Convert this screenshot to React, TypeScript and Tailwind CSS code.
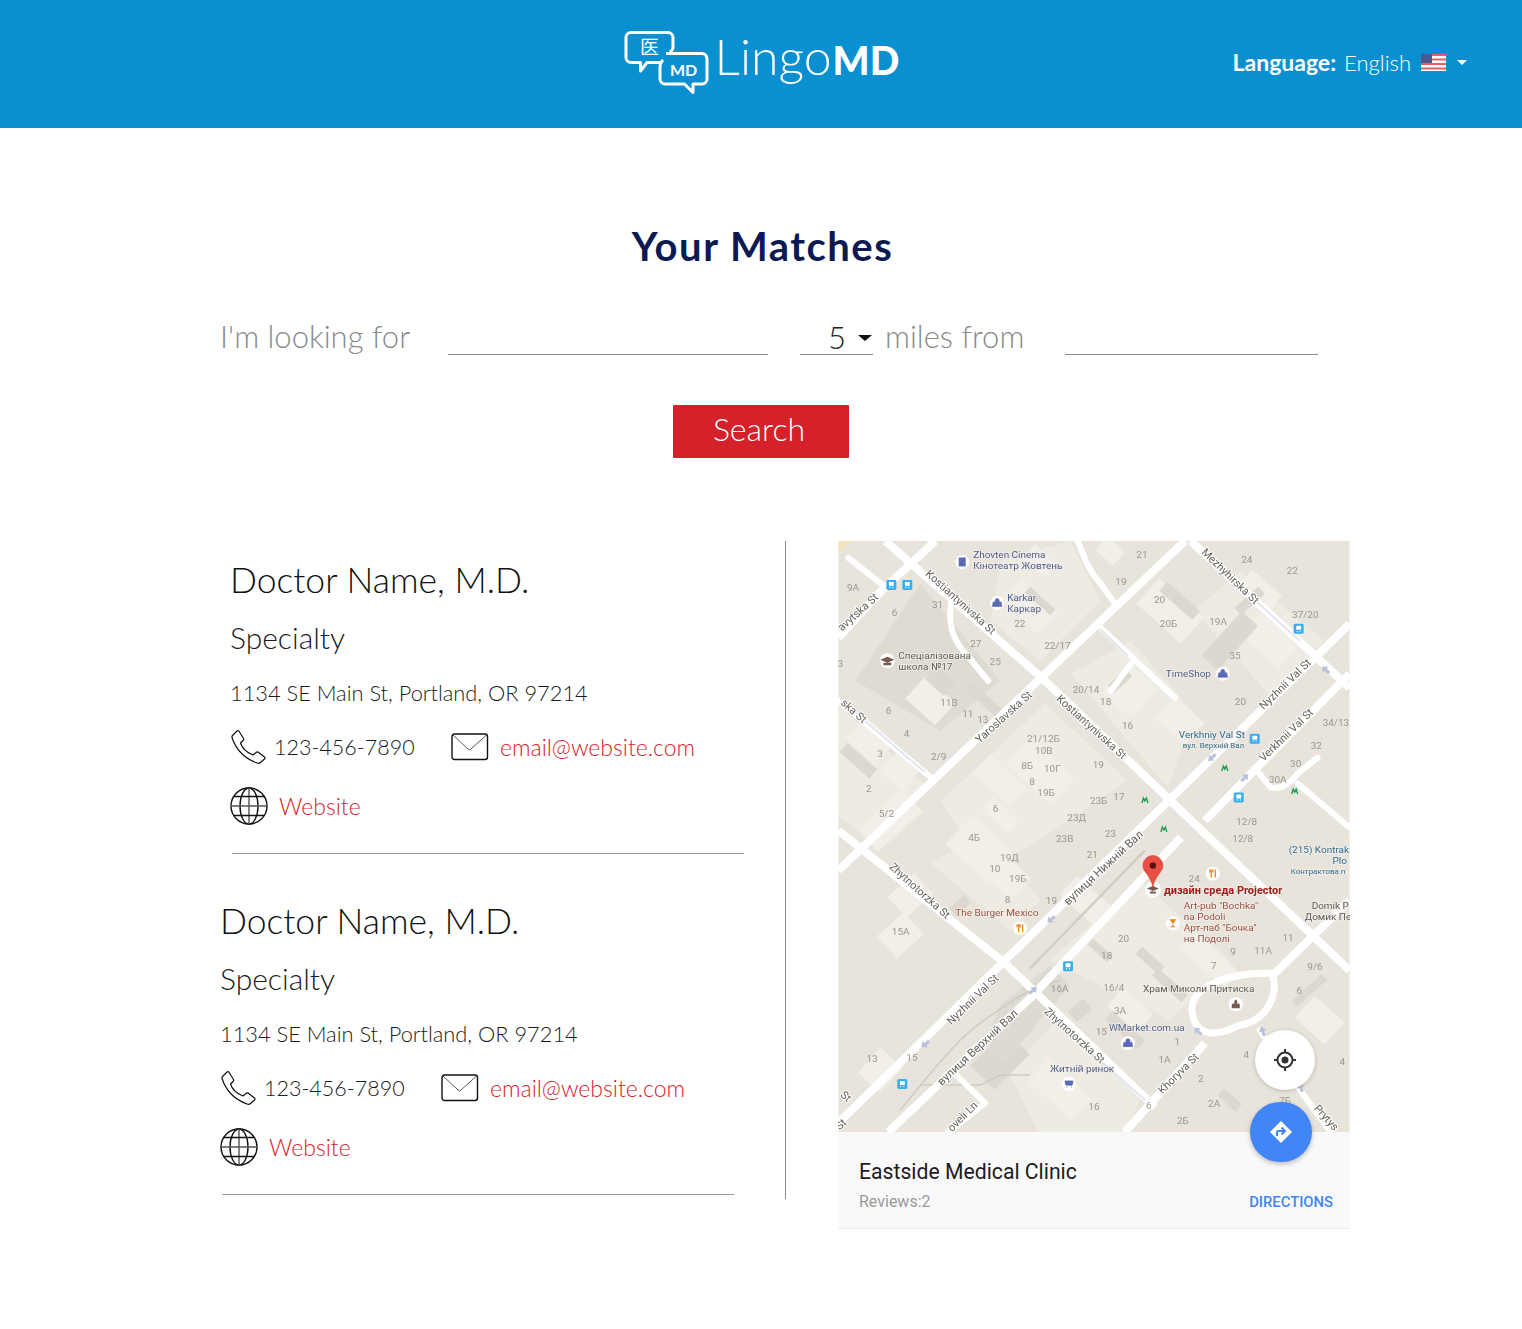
import React from "react";

type L = [string, number, number];
type T = { t: string; x: number; y: number; s?: number; c?: string; r?: number; w?: number };

const z4 = (x: number, y: number): [number, number] => [838 + x / 3, 540 + y / 3];
const z5 = (x: number, y: number): [number, number] => [838 + x / 3, 830 + y / 3];

const nums4: L[] = [
  ["9A",44,140],["21",912,40],["24",1227,55],["22",1364,88],["19",849,122],["6",169,214],["31",298,190],["20",965,176],["20Б",992,248],["19A",1141,241],["37/20",1403,221],["22",545,249],["27",413,309],["25",471,361],["22/17",658,315],["35",1192,344],["3",6,368],["20/14",744,447],["18",803,483],["20",1208,481],["11В",332,485],["6",151,508],["11",389,519],["13",434,536],["16",869,553],["34/13",1495,546],["21/12Б",616,593],["4",205,580],["10В",617,629],["32",1436,614],["2/9",301,649],["3",125,640],["8Б",567,675],["10Г",643,685],["19",781,671],["30",1374,668],["8",582,723],["30A",1320,718],["2",91,743],["19Б",624,757],["23Б",782,779],["17",843,769],["5/2",144,818],["6",472,803],["23Д",716,830],["12/8",1227,843],["23",817,879],["4Б",408,890],["23В",680,895],["12/8",1215,895],
];
const nums5: L[] = [
  ["19Д",514,80],["10",470,115],["19Б",539,143],["21",763,72],["24",1069,144],["8",508,206],["19",640,210],["15A",187,304],["20",857,325],["11",1351,323],["18",806,376],["9",1186,364],["11A",1276,361],["7",1128,407],["9/6",1432,410],["16A",665,474],["16/4",828,472],["6",1385,481],["3A",846,540],["15",790,604],["1",1018,635],["13",101,686],["15",221,682],["4",1226,673],["1A",980,687],["4",1514,695],["2",1089,745],["2A",1129,821],["16",768,829],["6",933,825],["2Б",1035,870],["7Б",1342,812],
];

const streets: T[] = [
  { t: "Kostiantynivska St", x: 958, y: 604, r: 42, s: 11 },
  { t: "Kostiantynivska St", x: 1089, y: 729, r: 42, s: 11 },
  { t: "Mezhyhirska St", x: 1228, y: 578, r: 44, s: 11 },
  { t: "Yaroslavska St", x: 1006, y: 719, r: -42, s: 11 },
  { t: "Nyzhnii Val St", x: 1288, y: 686, r: -44, s: 11 },
  { t: "Verkhnii Val St", x: 1289, y: 737, r: -44, s: 11 },
  { t: "avytska St", x: 860, y: 614, r: -42, s: 11 },
  { t: "ska St", x: 851, y: 713, r: 42, s: 11 },
  { t: "вулиця Нижній Вал", x: 1106, y: 870, r: -43, s: 11.500 },
  { t: "Zhytnotorzka St", x: 917, y: 893, r: 42, s: 11 },
  { t: "Zhytnotorzka St", x: 1072, y: 1038, r: 42, s: 11 },
  { t: "Nyzhnii Val St", x: 975, y: 1002, r: -44, s: 11 },
  { t: "вулиця Верхній Вал", x: 980, y: 1050, r: -43, s: 11.500 },
  { t: "Khoryva St", x: 1181, y: 1076, r: -45, s: 11 },
  { t: "oveli Ln", x: 965, y: 1119, r: -45, s: 11 },
  { t: "Prytys", x: 1324, y: 1120, r: 48, s: 11 },
  { t: "St", x: 843, y: 1099, r: 42, s: 11 },
  { t: "St", x: 843, y: 1127, r: -44, s: 11 },
];

const pois: T[] = [
  { t: "Zhovten Cinema", x: 973, y: 557, s: 10, c: "#4f5b8c" },
  { t: "Кінотеатр Жовтень", x: 973, y: 568, s: 10, c: "#4f5b8c" },
  { t: "Karkar", x: 1007, y: 600, s: 10, c: "#4f5b8c" },
  { t: "Каркар", x: 1007, y: 611, s: 10, c: "#4f5b8c" },
  { t: "Спеціалізована", x: 898, y: 658, s: 10, c: "#5f5a55" },
  { t: "школа №17", x: 898, y: 669, s: 10, c: "#5f5a55" },
  { t: "TimeShop", x: 1166, y: 676, s: 10, c: "#4f5b8c" },
  { t: "Verkhniy Val St", x: 1179, y: 737, s: 10, c: "#2f6a8c" },
  { t: "вул. Верхній Вал", x: 1183, y: 747, s: 8, c: "#2f6a8c" },
  { t: "(215) Kontrak", x: 1289, y: 853, s: 10, c: "#2f6a8c" },
  { t: "Plo", x: 1333, y: 864, s: 10, c: "#2f6a8c" },
  { t: "Контрактова п", x: 1291, y: 874, s: 8, c: "#2f6a8c" },
  { t: "Domik P", x: 1312, y: 909, s: 10, c: "#5f5a55" },
  { t: "Домик Пе", x: 1305, y: 920, s: 10, c: "#5f5a55" },
  { t: "The Burger Mexico", x: 955, y: 916, s: 10, c: "#9a5044" },
  { t: "Art-pub \"Bochka\"", x: 1184, y: 909, s: 10, c: "#9a5044" },
  { t: "na Podoli", x: 1184, y: 920, s: 10, c: "#9a5044" },
  { t: "Арт-паб \"Бочка\"", x: 1184, y: 931, s: 10, c: "#9a5044" },
  { t: "на Подолі", x: 1184, y: 942, s: 10, c: "#9a5044" },
  { t: "Храм Миколи Притиска", x: 1143, y: 992, s: 10, c: "#5f5a55" },
  { t: "WMarket.com.ua", x: 1109, y: 1031, s: 10, c: "#4f5b8c" },
  { t: "Житній ринок", x: 1050, y: 1072, s: 10, c: "#4f5b8c" },
];

const wide: string[] = [
  "M838 870L1185 540",
  "M838 637L881 590L935 540",
  "M838 1123L1350 623",
  "M888 1132L1031 997L1181 837",
  "M1205 820L1350 673",
  "M885 540L1045 680L1205 833L1350 970",
  "M1191 540L1350 687",
  "M838 830L1005 963L1155 1107",
  "M1125 1132L1205 1043",
  "M1275 973L1350 900",
];
const narrow: string[] = [
  "M838 700L931 777",
  "M848 557L881 583",
  "M1101 627L1175 697",
  "M1131 663L1111 690",
  "M951 603Q946 630 963 650L988 680",
  "M1078 540Q1088 570 1101 583L1115 603",
  "M1255 767L1271 787Q1285 790 1298 773L1318 757",
  "M1298 783L1350 827",
  "M951 1070L985 1103L948 1132",
  "M1298 1087L1331 1132",
  "M1260 1030L1298 1087",
];
const blocks: string[] = [
  "M1071 673L1131 640L1195 713L1168 787z",
  "M941 800L1045 703L1128 780L1038 840L985 870z",
  "M931 863L985 830L1040 900L1010 930z",
  "M1008 1070L1055 1023L1141 1097L1125 1132H1038z",
  "M1050 960L1140 880L1230 960L1170 1020z",
  "M838 705L925 785L870 840L838 815z",
  "M1195 610L1240 570L1325 640L1275 700z",
  "M1000 560L1070 540L1100 600L1040 660L990 620z",
];
const light: [number, number, number, number, number][] = [
  [890, 820, 60, 30, -42], [980, 850, 60, 38, 42], [1040, 770, 60, 36, 42], [1000, 780, 50, 25, 42], [930, 700, 40, 30, 42],
  [1170, 610, 60, 34, 42], [1270, 640, 50, 30, 42], [1130, 690, 40, 40, 42], [1180, 720, 40, 30, 42], [1030, 605, 50, 30, 42],
  [910, 895, 36, 28, -42], [900, 935, 36, 30, -42], [1085, 900, 45, 26, 42], [1210, 960, 60, 22, 42], [880, 1070, 30, 34, 42],
  [1060, 1090, 60, 30, 42], [1000, 870, 55, 30, 42], [1130, 1010, 40, 25, 42], [1320, 1020, 40, 30, 42], [1260, 590, 40, 22, 42], [870, 740, 40, 30, 42],
  [900, 770, 30, 30, 42], [1040, 560, 30, 18, 42], [1110, 550, 24, 18, 42], [985, 840, 44, 20, 42], [1000, 815, 36, 16, 42],
];
const dark: [number, number, number, number, number][] = [
  [1000, 1060, 34, 50, 45], [1230, 640, 22, 60, 42], [1180, 600, 44, 12, 42], [1040, 600, 34, 8, 42],
  [985, 700, 40, 10, 42], [1120, 680, 24, 10, -42], [858, 760, 40, 12, 42], [1150, 960, 30, 10, 42], [1170, 985, 40, 10, 42],
  [1125, 1030, 44, 12, 42], [1250, 600, 32, 10, -42], [960, 905, 20, 10, -42], [1310, 990, 40, 8, -42], [1230, 1100, 24, 10, 42],
  [1100, 950, 26, 8, 42], [1080, 1010, 20, 14, -42], [940, 680, 26, 18, 42],
];

function Poi({ x, y, c, k }: { x: number; y: number; c: string; k: "bag" | "fork" | "cup" }) {
  return (
    <g>
      <circle cx={x} cy={y} r={7} fill="#fff" />
      {k === "bag" && <path d={`M${x - 4} ${y - 1}h8l.8 4.5h-9.600zM${x - 2} ${y - 1}v-1.500a2 2 0 0 1 4 0V${y - 1}`} fill={c} stroke={c} strokeWidth={0.6} />}
      {k === "fork" && <path d={`M${x - 3} ${y - 4}v3M${x - 1.500} ${y - 4}v8M${x} ${y - 4}v3M${x + 2.500} ${y - 4}v8`} stroke={c} strokeWidth={1.300} fill="none" />}
      {k === "cup" && <path d={`M${x - 3.500} ${y - 4}h7l-3 4v3h2v1h-5v-1h2v-3z`} fill={c} />}
    </g>
  );
}

function Stop({ x, y, c = "#35aef3" }: { x: number; y: number; c?: string }) {
  return (
    <g>
      <rect x={x - 5} y={y - 5} width={10} height={10} rx={1.500} fill={c} />
      <rect x={x - 2.500} y={y - 3} width={5} height={4} rx={0.8} fill="#fff" />
      <circle cx={x - 1.500} cy={y + 2.500} r={0.7} fill="#fff" />
      <circle cx={x + 1.500} cy={y + 2.500} r={0.7} fill="#fff" />
    </g>
  );
}

function Metro({ x, y }: { x: number; y: number }) {
  return <path d={`M${x - 3} ${y + 2.500}l1.500-5 1.500 3 1.500-3 1.500 5`} fill="none" stroke="#1f9d55" strokeWidth={1.400} />;
}

function Arrow({ x, y, r }: { x: number; y: number; r: number }) {
  return <path transform={`rotate(${r} ${x} ${y})`} d={`M${x - 5} ${y}l5-4v2.500h5v3h-5v2.500z`} fill="#b9c1dd" />;
}

function MapArt() {
  return (
    <svg viewBox="838 540 512 592" className="block w-full h-[591px] blur-[0.4px]" style={{ fontFamily: "Roboto, sans-serif" }}>
      <rect x={838} y={540} width={512} height={592} fill="#e8e4dc" />
      <path d="M838 540h14l-14 12z" fill="#efe3c0" />
      <path d="M855 680L920 583L1000 680L940 730z" fill="#dfdbd3" />
      {blocks.map((d) => <path key={d} d={d} fill="#eeebe3" />)}
      {light.map(([x, y, w, h, r], i) => (
        <rect key={i} x={x - w / 2} y={y - h / 2} width={w} height={h} fill="#f2efe8" transform={`rotate(${r} ${x} ${y})`} />
      ))}
      {dark.map(([x, y, w, h, r], i) => (
        <rect key={i} x={x - w / 2} y={y - h / 2} width={w} height={h} fill="#dcd8cf" transform={`rotate(${r} ${x} ${y})`} />
      ))}
      <path d="M1000 1005L1050 965L1070 985L1005 1062L985 1040z" fill="#dedad2" />
      <path d="M1030 968L1145 850" stroke="#d2cec4" strokeWidth={2.500} fill="none" />
      <path d="M900 1110Q940 1060 960 1040T1030 990L1060 980" stroke="#cfcbc0" strokeWidth={1.500} fill="none" />
      <path d="M920 1085H980L1000 1075H1030" stroke="#cfcbc0" strokeWidth={1.500} fill="none" />
      <g fill="none" stroke="#fff" strokeLinecap="butt" strokeLinejoin="round">
        {wide.map((d) => <path key={d} d={d} strokeWidth={8} />)}
        {narrow.map((d) => <path key={d} d={d} strokeWidth={6} strokeLinecap="round" />)}
        <path d="M1192 1010C1192 985 1230 972 1272 973C1280 990 1270 1020 1240 1025C1220 1035 1195 1040 1192 1010z" strokeWidth={7} />
      </g>
      <g fill="none" stroke="#e3e5ef" strokeWidth={2}>
        <path d="M1100 628L1128 655" />
        <path d="M855 712L925 772" />
        <path d="M1245 590L1300 640" />
        <path d="M1100 1060L1145 1100" />
      </g>
      <g fill="#9b978f" fontSize={10}>
        {nums4.map(([t, x, y], i) => { const [a, b] = z4(x, y); return <text key={i} x={a} y={b + 3.500} textAnchor="middle">{t}</text>; })}
        {nums5.map(([t, x, y], i) => { const [a, b] = z5(x, y); return <text key={i} x={a} y={b + 3.500} textAnchor="middle">{t}</text>; })}
      </g>
      <g fill="#66625c" stroke="#fff" strokeWidth={2} paintOrder="stroke">
        {streets.map((s, i) => (
          <text key={i} x={s.x} y={s.y} fontSize={s.s} textAnchor="middle" transform={`rotate(${s.r} ${s.x} ${s.y})`}>{s.t}</text>
        ))}
      </g>
      <g stroke="#f2efe9" strokeWidth={1.500} paintOrder="stroke">
        {pois.map((p, i) => <text key={i} x={p.x} y={p.y} fontSize={p.s} fill={p.c}>{p.t}</text>)}
      </g>
      <text x={1164} y={894} fontSize={11} fontWeight={700} fill="#a01c1c" stroke="#f2efe9" strokeWidth={1.500} paintOrder="stroke">дизайн среда Projector</text>
      <Stop x={891} y={584} />
      <Stop x={907} y={584} />
      <Stop x={1299} y={628} />
      <Stop x={1239} y={797} />
      <Stop x={1255} y={738} />
      <Stop x={1068} y={966} />
      <Stop x={902} y={1084} />
      <Metro x={1225} y={768} />
      <Metro x={1295} y={791} />
      <Metro x={1145} y={800} />
      <Metro x={1164} y={829} />
      <Arrow x={1212} y={757} r={-42} />
      <Arrow x={1245} y={777} r={135} />
      <Arrow x={1326} y={669} r={42} />
      <Arrow x={1051} y={919} r={-40} />
      <Arrow x={1033} y={990} r={140} />
      <Arrow x={925} y={1044} r={-40} />
      <Arrow x={1198} y={1031} r={42} />
      <Arrow x={1263} y={1031} r={70} />
      <Arrow x={1301} y={1087} r={70} />
      <circle cx={962} cy={561} r={7} fill="#fff" />
      <rect x={958.500} y={556.500} width={7} height={9} fill="#5a6ab8" />
      <Poi x={997} y={602} c="#5a6ab8" k="bag" />
      <Poi x={1223} y={673} c="#5a6ab8" k="bag" />
      <Poi x={1128} y={1043} c="#5a6ab8" k="bag" />
      <Poi x={1213} y={873} c="#f2811d" k="fork" />
      <Poi x={1020} y={928} c="#f2811d" k="fork" />
      <Poi x={1173} y={923} c="#f2811d" k="cup" />
      <circle cx={887} cy={660} r={7.500} fill="#fff" />
      <path d="M880 659l7-3 7 3-7 3zM883 662v2.500h8V662z" fill="#7a5a50" />
      <circle cx={1069} cy={1084} r={7} fill="#fff" />
      <path d="M1065 1081h8l-1 4h-6zM1066.500 1087h.8M1071 1087h.8" fill="#5a6ab8" stroke="#5a6ab8" />
      <circle cx={1236} cy={1004} r={7} fill="#fff" />
      <path d="M1232 1008v-4l1.500-1 1 1v-3l1.500-2 1.500 2v3l1-1 1.500 1v4z" fill="#7a5a50" />
      <circle cx={1153} cy={889} r={8} fill="#fff" />
      <path d="M1147 888l6-2.500 6 2.500-6 2.500zM1150 891v2h6v-2z" fill="#7a5a50" />
      <path d="M1153 887C1151 875 1143 872 1143 865a10 10 0 0 1 20 0C1163 872 1155 875 1153 887z" fill="#ea4f42" stroke="#c9372c" strokeWidth={0.5} />
      <circle cx={1153} cy={865} r={3.200} fill="#5a1410" />
    </svg>
  );
}

function PhoneIcon() {
  return (
    <svg width={36} height={36} viewBox="0 0 36 36" fill="none" stroke="#111" strokeWidth={1.200} strokeLinejoin="round" className="shrink-0">
      <path d="M2.500 6.500L7 2Q8 1.200 9 2.200L13.500 9.500Q14 10.500 13 11.500L10.500 14Q13 22 23 26L26 23.500Q27 22.500 28 23L34.500 28Q35.500 29 34.500 30L30.500 33.500Q29 35 27 34Q8 27 2 8.500Q1.800 7.200 2.500 6.500z" />
    </svg>
  );
}

function MailIcon() {
  return (
    <svg width={38} height={28} viewBox="0 0 38 28" fill="none" className="shrink-0">
      <rect x={1} y={1} width={35.500} height={25.500} rx={2.500} stroke="#111" strokeWidth={1.400} />
      <path d="M2 2l15 14q1.500 1.500 3 0L35.500 2" stroke="#444" strokeWidth={0.9} />
    </svg>
  );
}

function GlobeIcon() {
  return (
    <svg width={38} height={38} viewBox="0 0 38 38" fill="none" stroke="#111" strokeWidth={1.400} className="shrink-0">
      <circle cx={19} cy={19} r={18} />
      <ellipse cx={19} cy={19} rx={9} ry={18} />
      <path d="M19 1v36M1 19h36" stroke="#555" />
      <path d="M4 9.500h30M4 28.500h30" />
    </svg>
  );
}

function Card({ indent, bottom }: { indent: string; bottom: string }) {
  return (
    <div className={`${indent} ${bottom} w-[522px]`}>
      <h2 className="text-[35.500px] leading-[44px] font-light text-[#111]">Doctor Name, M.D.</h2>
      <p className="mt-[15px] text-[30px] leading-[40px] font-light text-[#1a1a1a]">Specialty</p>
      <p className="mt-[20px] text-[21.800px] leading-[32px] font-light text-[#1a1a1a]">1134 SE Main St, Portland, OR 97214</p>
      <div className="mt-[20px] flex items-center h-[36px]">
        <PhoneIcon />
        <span className="ml-[8px] text-[21.500px] font-light text-[#1a1a1a] w-[177px]">123-456-7890</span>
        <MailIcon />
        <a className="ml-[11px] text-[23px] font-light text-[#d4232b]">email@website.com</a>
      </div>
      <div className="mt-[22px] flex items-center h-[38px]">
        <GlobeIcon />
        <a className="ml-[11px] text-[23px] font-light text-[#d4232b]">Website</a>
      </div>
      <div className="mt-[28px] h-px bg-[#9a9a9a] w-[512px] ml-[2px]" />
    </div>
  );
}

export default function App() {
  return (
    <div className="min-h-[1329px] bg-white" style={{ fontFamily: "Lato, sans-serif" }}>
      <header className="h-[128px] bg-[#0a90d0] grid grid-cols-[1fr_auto_1fr] items-center">
        <div />
        <div className="flex items-center -mt-[5px] ml-[1px]">
          <svg width={86} height={68} viewBox="624 28 86 68" fill="none" stroke="#fff" strokeWidth={3} strokeLinejoin="round">
            <path d="M660 62.500H647L640.500 71V62.500H631a5 5 0 0 1-5-5V37.500a5 5 0 0 1 5-5H668a5 5 0 0 1 5 5V47q0 3-3 5" />
            <path d="M666 53.500H702a5 5 0 0 1 5 5V79a5 5 0 0 1-5 5H693V92.500L684.500 84H665a5 5 0 0 1-5-5V67q0-4 3-7" />
            <text x={640} y={54} fontSize={19} fill="#fff" stroke="none" style={{ fontFamily: "'Noto Sans CJK SC', sans-serif" }}>医</text>
            <text x={670} y={76} fontSize={16} fontWeight={700} fill="#fff" stroke="none" style={{ fontFamily: "Lato, sans-serif" }}>MD</text>
          </svg>
          <span className="ml-[5px] -mt-[12px] text-[50px] leading-none text-white font-light">Lingo<span className="font-black text-[39px] ml-[1px]">MD</span></span>
        </div>
        <div className="flex items-center justify-end pr-[55px] text-white -mt-[3px]">
          <span className="text-[23px] font-bold">Language:</span>
          <span className="ml-[8px] text-[22px] font-light">English</span>
          <svg width={25} height={17} viewBox="0 0 25 17" className="ml-[10px]">
            <rect width={25} height={17} fill="#fff" />
            <path d="M0 0h25v2H0zM0 4.500h25v2H0zM0 9h25v2H0zM0 13.500h25v2H0z" fill="#e2606c" />
            <rect width={11} height={9} fill="#4f5690" />
          </svg>
          <span className="ml-[11px] w-0 h-0 border-x-[5px] border-x-transparent border-t-[5px] border-t-white" />
        </div>
      </header>

      <main className="flex flex-col items-center">
        <h1 className="mt-[93px] ml-[3px] text-[40px] leading-[50px] font-bold tracking-[1.5px] text-[#0b1a52]">Your Matches</h1>

        <div className="mt-[40px] self-start ml-[222px] w-[1096px] flex items-end h-[44px] text-[31px] font-light text-[#8a8a8a]">
          <span className="w-[226px] leading-[38px] -ml-[2px] pr-[-2px]">I'm looking for</span>
          <div className="ml-[2px] w-[320px] h-px bg-[#8a8a8a]" />
          <div className="ml-[32px] w-[73px] border-b border-[#8a8a8a] flex items-center h-[40px] pt-[6px] text-[#222]">
            <span className="ml-[28px] w-[30px]">5</span>
            <span className="w-0 h-0 border-x-[7px] border-x-transparent border-t-[6px] border-t-[#111]" />
          </div>
          <span className="ml-[12px] w-[180px] leading-[38px]">miles from</span>
          <div className="w-[253px] h-px bg-[#8a8a8a]" />
        </div>

        <button className="mt-[50px] w-[176px] h-[53px] bg-[#d4212a] text-white text-[32px] font-light rounded-[1px] flex items-center justify-center pb-[6px] pr-[4px]">Search</button>

        <section className="mt-[83px] self-start ml-[221px] w-[1129px] flex items-start">
          <div className="w-[565px] h-[658px] border-r border-[#8a8a8a] pt-[17px]">
            <Card indent="ml-[9px]" bottom="mb-[45px]" />
            <Card indent="-ml-[1px]" bottom="" />
          </div>
          <div className="relative ml-[52px] w-[512px] border-b border-[#ececec]">
            <MapArt />
            <div className="h-[96px] bg-[#f9f9f9] px-[21px] pt-[26px] relative" style={{ fontFamily: "Roboto, sans-serif" }}>
              <div className="text-[21.200px] leading-[28px] text-[#1c1c1c]">Eastside Medical Clinic</div>
              <div className="mt-[4px] flex justify-between items-center">
                <span className="text-[16px] text-[#9a9a9a]">Reviews:2</span>
                <span className="text-[14.800px] font-medium text-[#4285f4] mr-[-4px]">DIRECTIONS</span>
              </div>
            </div>
            <div className="absolute left-[417px] top-[489px] w-[60px] h-[60px] rounded-full bg-white shadow-[0_1px_4px_rgba(0,0,0,0.2)] flex items-center justify-center">
              <svg width={24} height={24} viewBox="0 0 24 24" fill="none" stroke="#333" strokeWidth={2}>
                <circle cx={12} cy={12} r={7.500} />
                <circle cx={12} cy={12} r={3.500} fill="#333" stroke="none" />
                <path d="M12 1v3M12 20v3M1 12h3M20 12h3" />
              </svg>
            </div>
            <div className="absolute left-[412px] top-[561px] w-[62px] h-[60px] rounded-full bg-[#4285f4] shadow-[0_2px_5px_rgba(0,0,0,0.25)] flex items-center justify-center">
              <svg width={24} height={24} viewBox="0 0 24 24">
                <path d="M12 1l11 11-11 11L1 12z" fill="#fff" />
                <path d="M8 16v-4q0-1 1-1h6M12.500 7.500L16 11l-3.500 3.500" fill="none" stroke="#4285f4" strokeWidth={2} />
              </svg>
            </div>
          </div>
        </section>
      </main>
    </div>
  );
}
